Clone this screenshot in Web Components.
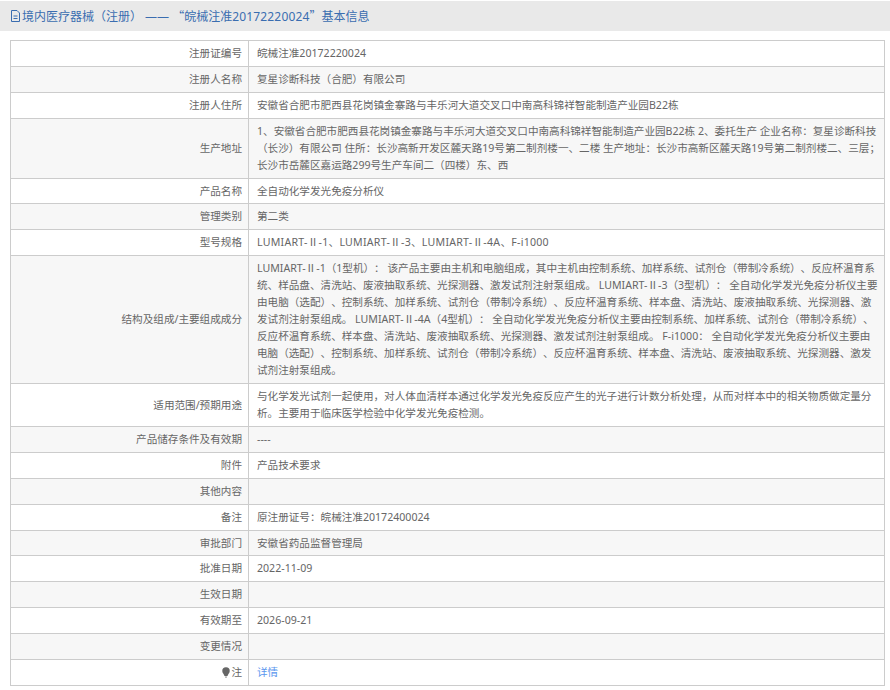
<!DOCTYPE html>
<html lang="zh-CN">
<head>
<meta charset="utf-8">
<title>医疗器械基本信息</title>
<style>
  html, body { margin: 0; padding: 0; background: #fff; }
  body {
    font: 10.6px/17px "Noto Sans", "Noto Sans CJK SC", "Liberation Sans", sans-serif;
    color: #666;
    text-spacing-trim: space-all;
    overflow: hidden;
    height: 690px;
  }
  .cjk { font-family: "Noto Sans CJK SC", sans-serif; }
  .num { letter-spacing: .15px; }
</style>
</head>
<body>
<detail-page>
  <span slot="title">境内医疗器械（注册） —— <span class="cjk">“</span>皖械注准<span class="num">20172220024</span><span class="cjk">”</span>基本信息</span>
  <info-row label="注册证编号">皖械注准20172220024</info-row>
  <info-row label="注册人名称">复星诊断科技（合肥）有限公司</info-row>
  <info-row label="注册人住所">安徽省合肥市肥西县花岗镇金寨路与丰乐河大道交叉口中南高科锦祥智能制造产业园B22栋</info-row>
  <info-row label="生产地址">1、安徽省合肥市肥西县花岗镇金寨路与丰乐河大道交叉口中南高科锦祥智能制造产业园B22栋 2、委托生产 企业名称：复星诊断科技（长沙）有限公司 住所：长沙高新开发区麓天路19号第二制剂楼一、二楼 生产地址：长沙市高新区麓天路19号第二制剂楼二、三层；长沙市岳麓区嘉运路299号生产车间二（四楼）东、西</info-row>
  <info-row label="产品名称">全自动化学发光免疫分析仪</info-row>
  <info-row label="管理类别">第二类</info-row>
  <info-row label="型号规格"><span style="letter-spacing:.26px">LUMIART-Ⅱ-1、LUMIART-Ⅱ-3、LUMIART-Ⅱ-4A、F-i1000</span></info-row>
  <info-row label="结构及组成/主要组成成分">LUMIART-Ⅱ-1（1型机）： 该产品主要由主机和电脑组成，其中主机由控制系统、加样系统、试剂仓（带制冷系统）、反应杯温育系统、样品盘、清洗站、废液抽取系统、光探测器、激发试剂注射泵组成。 LUMIART-Ⅱ-3（3型机）： 全自动化学发光免疫分析仪主要由电脑（选配）、控制系统、加样系统、试剂仓（带制冷系统）、反应杯温育系统、样本盘、清洗站、废液抽取系统、光探测器、激发试剂注射泵组成。 LUMIART-Ⅱ-4A（4型机）： 全自动化学发光免疫分析仪主要由控制系统、加样系统、试剂仓（带制冷系统）、反应杯温育系统、样本盘、清洗站、废液抽取系统、光探测器、激发试剂注射泵组成。 F-i1000： 全自动化学发光免疫分析仪主要由<br>电脑（选配）、控制系统、加样系统、试剂仓（带制冷系统）、反应杯温育系统、样本盘、清洗站、废液抽取系统、光探测器、激发试剂注射泵组成。</info-row>
  <info-row label="适用范围/预期用途">与化学发光试剂一起使用，对人体血清样本通过化学发光免疫反应产生的光子进行计数分析处理，从而对样本中的相关物质做定量分析。主要用于临床医学检验中化学发光免疫检测。</info-row>
  <info-row label="产品储存条件及有效期">----</info-row>
  <info-row label="附件">产品技术要求</info-row>
  <info-row label="其他内容"></info-row>
  <info-row label="备注">原注册证号：皖械注准20172400024</info-row>
  <info-row label="审批部门">安徽省药品监督管理局</info-row>
  <info-row label="批准日期">2022-11-09</info-row>
  <info-row label="生效日期"></info-row>
  <info-row label="有效期至">2026-09-21</info-row>
  <info-row label="变更情况"></info-row>
  <info-row label="注" hint><a href="#">详情</a></info-row>
</detail-page>
<script>
class DetailPage extends HTMLElement {
  constructor() {
    super();
    this.attachShadow({ mode: 'open' });
    this.shadowRoot.innerHTML = `
      <style>
        :host { display: block; padding-top: 1px; }
        header {
          display: flex;
          align-items: center;
          gap: 2px;
          height: 30px;
          padding-left: 11px;
          background: #e9e9e9;
          color: #3a6db0;
          font-size: 12px;
          white-space: pre;
        }
        svg { width: 9px; height: 12px; flex: none; }
        .list {
          margin: 9px 5px 0 10px;
          border: 1px solid #ccc;
        }
      </style>
      <header><svg viewBox="0 0 9 12" fill="none" stroke="currentColor">
          <path d="M.5.5h5.500l2.500 2.500v8.500h-8z"/><path d="M2.500 6h4M2.500 8.500h4"/>
        </svg><slot name="title"></slot></header>
      <div class="list"><slot></slot></div>
    `;
  }
}

class InfoRow extends HTMLElement {
  static get observedAttributes() {
    return ['label'];
  }

  constructor() {
    super();
    this.attachShadow({ mode: 'open' });
  }

  attributeChangedCallback() {
    this.render();
  }

  connectedCallback() {
    this.render();
  }

  render() {
    const bulb = this.hasAttribute('hint')
      ? '<svg viewBox="0 0 9 12"><path fill="#666" d="M4.500 0a4.200 4.200 0 0 1 4.200 4.200c0 2.300-2 3.500-2.500 5.800h-3.400c-.5-2.300-2.500-3.500-2.500-5.800a4.200 4.200 0 0 1 4.200-4.200z"/><path fill="#999" d="M3.200 10.500h2.600l-.5 1.500h-1.600z"/></svg>'
      : '';
    this.shadowRoot.innerHTML = `
      <style>
        :host { display: grid; grid-template-columns: 238px 1fr; border-top: 1px solid #ccc; }
        :host(:first-of-type) { border-top: 0; }
        :host(:nth-of-type(even)) { background: #f7f7f7; }
        .label {
          display: flex;
          align-items: center;
          justify-content: flex-end;
          padding: 4px 6px 3.900px 4px;
          border-right: 1px solid #ccc;
        }
        svg { width: 8px; height: 11px; margin-right: 1px; flex: none; }
        .value { padding: 4px 2px 3.900px 8px; min-height: 17px; }
        ::slotted(a) { color: #5a96ee; text-decoration: none; }
      </style>
      <div class="label">${bulb}${this.getAttribute('label') || ''}</div>
      <div class="value"><slot></slot></div>
    `;
  }
}

customElements.define('detail-page', DetailPage);
customElements.define('info-row', InfoRow);
</script>
</body>
</html>
